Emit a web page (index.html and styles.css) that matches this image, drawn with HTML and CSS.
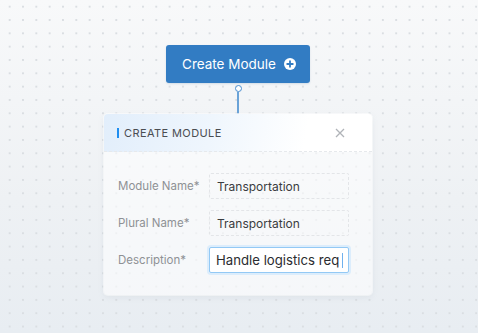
FILE: index.html
```html
<!DOCTYPE html>
<html>
<head>
<meta charset="utf-8">
<link rel="stylesheet" href="styles.css">
</head>
<body>
<div class="stage">
  <button class="create-btn">
    <span>Create Module</span>
    <svg class="plus" width="12" height="12" viewBox="0 0 12 12"><circle cx="6" cy="6" r="6" fill="#fff"/><path d="M6 3.2v5.6M3.2 6h5.6" stroke="#327cc3" stroke-width="1.8" stroke-linecap="round"/></svg>
  </button>
  <div class="connector">
    <span class="node"></span>
    <span class="wire"></span>
  </div>
  <div class="card">
    <div class="card-head">
      <span class="bar"></span>
      <span class="title">CREATE MODULE</span>
      <svg class="close" width="10" height="10" viewBox="0 0 10 10"><path d="M1 1l8 8M9 1l-8 8" stroke="#b0b3b8" stroke-width="1.3"/></svg>
    </div>
    <div class="card-body">
      <div class="row">
        <label class="lbl">Module Name*</label>
        <div class="field">Transportation</div>
      </div>
      <div class="row">
        <label class="lbl">Plural Name*</label>
        <div class="field">Transportation</div>
      </div>
      <div class="row">
        <label class="lbl">Description*</label>
        <div class="field active">Handle logistics req<span class="caret"></span></div>
      </div>
    </div>
  </div>
</div>
</body>
</html>
```

FILE: styles.css
```css
html, body {
  margin: 0;
  padding: 0;
}
body {
  width: 478px;
  height: 333px;
  overflow: hidden;
  font-family: Inter, "Noto Sans", sans-serif;
  background-color: #eef1f4;
  background-image:
    radial-gradient(circle, #dadee2 0.8px, transparent 1.1px),
    linear-gradient(to bottom, #f8f9fa 0%, #eef1f4 60%, #e8edf2 100%);
  background-size: 13.33px 13.33px, 100% 100%;
  background-position: 3px 0px, 0 0;
}
.stage {
  display: flex;
  flex-direction: column;
  align-items: center;
  padding-top: 45px;
}
.create-btn {
  display: flex;
  align-items: center;
  gap: 8px;
  height: 38px;
  width: 144px;
  margin-left: -2px;
  justify-content: center;
  background: #327cc3;
  border: none;
  border-radius: 3px;
  color: #fff;
  font-family: Inter, "Noto Sans", sans-serif;
  font-size: 13.5px;
  padding: 0 0 0 2px;
  box-shadow: 0 1px 2px rgba(30, 80, 140, 0.15);
}
.plus { display: block; }
.connector {
  display: flex;
  flex-direction: column;
  align-items: center;
  width: 10px;
  margin-left: -2px;
}
.node {
  width: 5px;
  height: 5px;
  margin-top: 2px;
  border: 1.3px solid #4a8fd0;
  border-radius: 50%;
  background: #fff;
}
.wire {
  width: 2px;
  height: 22px;
  background: #6aa3d8;
}
.card {
  width: 268px;
  margin-left: -2px;
  background: rgba(255, 255, 255, 0.55);
  border-radius: 4px;
  box-shadow: 0 2px 6px rgba(120, 140, 160, 0.12), 0 0 0 1px rgba(255, 255, 255, 0.7);
  overflow: hidden;
}
.card-head {
  display: flex;
  align-items: center;
  height: 37px;
  padding: 0 27px 0 13px;
  background: linear-gradient(100deg, #e2eefb 0%, #eff6fd 40%, #ffffff 75%);
  border-bottom: 1px dashed #e6e9ec;
}
.bar {
  width: 2px;
  height: 10px;
  background: #1f8ef0;
  margin-right: 5px;
}
.title {
  flex: 1;
  font-size: 11px;
  letter-spacing: 0.4px;
  color: #4a4d52;
}
.close { display: block; }
.card-body {
  display: flex;
  flex-direction: column;
  gap: 11px;
  padding: 21px 23px 22px 14px;
}
.row {
  display: flex;
  align-items: center;
}
.lbl {
  width: 91px;
  font-size: 11.5px;
  color: #8e9195;
}
.field {
  flex: 1;
  height: 26px;
  box-sizing: border-box;
  border: 1px dashed #e3e5e8;
  border-radius: 2px;
  display: flex;
  align-items: center;
  padding-left: 7px;
  font-size: 12px;
  color: #3a3c40;
}
.field.active {
  background: #fff;
  border: 1px solid #93c9f5;
  box-shadow: 0 0 0 2px #dcedfc;
  padding-left: 6px;
  font-size: 13.2px;
  color: #2a2c30;
}
.caret {
  display: inline-block;
  width: 1px;
  height: 15px;
  margin-left: 3px;
  background: #6fb1ee;
}
```
